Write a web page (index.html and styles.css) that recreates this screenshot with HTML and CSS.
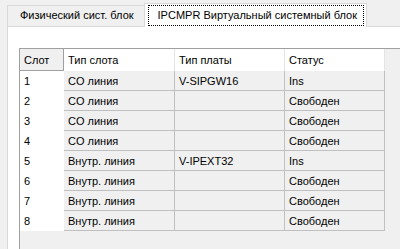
FILE: index.html
```html
<!DOCTYPE html>
<html lang="ru">
<head>
    <meta charset="UTF-8">
    <title>IPCMPR</title>
    <link rel="stylesheet" href="styles.css">
</head>
<body>
    <div class="tabs">
        <div class="tab">Физический сист. блок</div>
        <div class="tab active"><span class="tab-focus">IPCMPR Виртуальный системный блок</span></div>
    </div>
    <div class="tab-panel">
        <div class="grid">
            <table class="slots">
                <colgroup>
                    <col class="col-slot">
                    <col class="col-type">
                    <col class="col-board">
                    <col class="col-status">
                </colgroup>
                <thead>
                    <tr>
                        <th class="slot-head">Слот</th>
                        <th>Тип слота</th>
                        <th>Тип платы</th>
                        <th>Статус</th>
                    </tr>
                </thead>
                <tbody>
                    <tr><td class="slot">1</td><td>CO линия</td><td>V-SIPGW16</td><td>Ins</td></tr>
                    <tr><td class="slot">2</td><td>CO линия</td><td></td><td>Свободен</td></tr>
                    <tr><td class="slot">3</td><td>CO линия</td><td></td><td>Свободен</td></tr>
                    <tr><td class="slot">4</td><td>CO линия</td><td></td><td>Свободен</td></tr>
                    <tr><td class="slot">5</td><td>Внутр. линия</td><td>V-IPEXT32</td><td>Ins</td></tr>
                    <tr><td class="slot">6</td><td>Внутр. линия</td><td></td><td>Свободен</td></tr>
                    <tr><td class="slot">7</td><td>Внутр. линия</td><td></td><td>Свободен</td></tr>
                    <tr><td class="slot">8</td><td>Внутр. линия</td><td></td><td>Свободен</td></tr>
                </tbody>
            </table>
        </div>
    </div>
</body>
</html>
```

FILE: styles.css
```css
* {
    margin: 0;
    padding: 0;
    box-sizing: border-box;
}

body {
    font-family: "Liberation Sans", Arial, sans-serif;
    font-size: 11px;
    color: #000;
    background: #f0f0f0;
    width: 400px;
    height: 249px;
    overflow: hidden;
}

.tabs {
    display: flex;
    align-items: flex-end;
    padding: 3px 0 0 7px;
    height: 26px;
}

.tab {
    height: 21px;
    padding: 0 10px 0 12px;
    line-height: 19px;
    border: 1px solid #d9d9d9;
    border-bottom: none;
    border-right: none;
    background: #f0f0f0;
    white-space: nowrap;
}

.tab.active {
    height: 24px;
    padding: 1px 2px 1px 3px;
    margin-bottom: -1px;
    background: #fff;
    border-right: 1px solid #d9d9d9;
}

.tab-focus {
    display: block;
    height: 21px;
    line-height: 19px;
    padding: 0 6px 0 9px;
    border: 1px dotted #000;
}

.tab-panel {
    margin-left: 7px;
    border-top: 1px solid #d9d9d9;
    border-left: 1px solid #d9d9d9;
    background: #fff;
    height: 223px;
    padding: 21px 0 0 11px;
}

.grid {
    height: 210px;
    background: #f0f0f0;
    border-top: 1px solid #a0a0a0;
    border-left: 1px solid #a0a0a0;
}

.slots {
    border-collapse: separate;
    border-spacing: 0;
    table-layout: fixed;
    width: 365px;
}

.col-slot { width: 44px; }
.col-type { width: 111px; }
.col-board { width: 110px; }
.col-status { width: 100px; }

.slots th {
    height: 22px;
    padding: 0 4px;
    text-align: left;
    font-weight: normal;
    background: #fff;
    border-right: 1px solid #e5e5e5;
    white-space: nowrap;
}

.slots th.slot-head {
    background: #f0f0f0;
    border-right: 1px solid #a0a0a0;
    border-bottom: 1px solid #a0a0a0;
}

.slots td {
    height: 20px;
    padding: 0 4px;
    background: #f0f0f0;
    border-right: 1px solid #c0c0c0;
    border-bottom: 1px solid #c0c0c0;
    white-space: nowrap;
}

.slots td.slot {
    background: #fff;
    border: none;
}
```
